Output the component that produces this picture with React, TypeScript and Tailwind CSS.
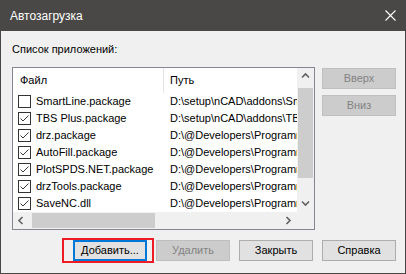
import React from 'react';

const rows = [
  { name: 'SmartLine.package', path: 'D:\\setup\\nCAD\\addons\\SmartLine\\SmartLine.package', checked: false },
  { name: 'TBS Plus.package', path: 'D:\\setup\\nCAD\\addons\\TBS Plus\\TBS Plus.package', checked: true },
  { name: 'drz.package', path: 'D:\\@Developers\\Programmers\\drz\\drz.package', checked: true },
  { name: 'AutoFill.package', path: 'D:\\@Developers\\Programmers\\AutoFill\\AutoFill.package', checked: true },
  { name: 'PlotSPDS.NET.package', path: 'D:\\@Developers\\Programmers\\PlotSPDS\\PlotSPDS.NET.package', checked: true },
  { name: 'drzTools.package', path: 'D:\\@Developers\\Programmers\\drzTools\\drzTools.package', checked: true },
  { name: 'SaveNC.dll', path: 'D:\\@Developers\\Programmers\\SaveNC\\SaveNC.dll', checked: true },
];

const Chevron = ({ dir }: { dir: 'up' | 'down' | 'left' | 'right' }) => {
  const pts = {
    up: '1,5.5 4.5,2 8,5.5',
    down: '1,2.5 4.5,6 8,2.5',
    left: '5.5,1 2,4.5 5.5,8',
    right: '2.5,1 6,4.5 2.5,8',
  }[dir];
  return (
    <svg width="9" height="9" viewBox="0 0 9 9">
      <polyline points={pts} fill="none" stroke="#606060" strokeWidth="1.6" />
    </svg>
  );
};

const CheckBox = ({ checked }: { checked: boolean }) => (
  <span className="w-[13px] h-[13px] border border-[#333333] bg-white flex items-center justify-center shrink-0">
    {checked && (
      <svg width="11" height="11" viewBox="0 0 11 11">
        <polyline points="1.5,5.5 4,8 9.5,2.5" fill="none" stroke="#3a3a3a" strokeWidth="1" />
      </svg>
    )}
  </span>
);

const WinButton = ({ label, disabled, focused }: { label: string; disabled?: boolean; focused?: boolean }) => (
  <button
    className={`w-[74px] h-[21px] flex items-center justify-center text-[11px] leading-none ${
      disabled
        ? 'bg-[#cccccc] border border-[#bfbfbf] text-[#838383]'
        : focused
        ? 'bg-[#e1e1e1] border-2 border-[#0078d7] text-black'
        : 'bg-[#e1e1e1] border border-[#adadad] text-black'
    }`}
  >
    {label}
  </button>
);

export default function App() {
  return (
    <div className="w-[406px] h-[274px] flex flex-col bg-[#4a4846] font-['Liberation_Sans',sans-serif] text-[11px] text-black">
      {/* Title bar */}
      <div className="h-[31px] flex items-center justify-between pl-[10px] pr-[10px] text-white text-[12px]">
        <span>Автозагрузка</span>
        <svg width="11" height="11" viewBox="0 0 11 11">
          <path d="M0.5 0.5 L10.5 10.5 M10.5 0.5 L0.5 10.5" stroke="#ffffff" strokeWidth="1.1" />
        </svg>
      </div>

      {/* Body */}
      <div className="flex-1 mx-px mb-px bg-[#f0f0f0] flex flex-col pl-[11px] pr-[9px]">
        <div className="mt-[11px] h-[14px] leading-[14px]">Список приложений:</div>

        <div className="flex mt-[11px]">
          {/* List view */}
          <div className="w-[303px] h-[163px] border border-[#828790] bg-white grid grid-cols-[1fr_17px] grid-rows-[1fr_17px]">
            <div className="overflow-hidden min-w-0">
              <div className="h-[25px] flex items-center">
                <div className="w-[150px] pl-[7px]">Файл</div>
                <div className="w-px h-[25px] bg-[#e5e5e5]" />
                <div className="pl-[6px]">Путь</div>
              </div>
              {rows.map((r) => (
                <div key={r.name} className="h-[17px] flex items-center whitespace-nowrap">
                  <div className="w-[151px] shrink-0 flex items-center pl-[5px] gap-[5px] overflow-hidden">
                    <CheckBox checked={r.checked} />
                    <span>{r.name}</span>
                  </div>
                  <div className="flex-1 min-w-0 pl-[6px] overflow-hidden">{r.path}</div>
                </div>
              ))}
            </div>

            {/* Vertical scrollbar */}
            <div className="bg-[#f0f0f0] flex flex-col">
              <div className="h-[17px] flex items-center justify-center">
                <Chevron dir="up" />
              </div>
              <div className="mx-px mt-[3px] h-[90px] bg-[#cdcdcd]" />
              <div className="flex-1" />
              <div className="h-[17px] flex items-center justify-center">
                <Chevron dir="down" />
              </div>
            </div>

            {/* Horizontal scrollbar */}
            <div className="bg-[#f0f0f0] flex items-stretch">
              <div className="w-[17px] flex items-center justify-center">
                <Chevron dir="left" />
              </div>
              <div className="my-px ml-[2px] w-[123px] bg-[#cdcdcd]" />
              <div className="flex-1" />
              <div className="w-[17px] flex items-center justify-center">
                <Chevron dir="right" />
              </div>
            </div>
            <div className="bg-[#f0f0f0]" />
          </div>

          {/* Side buttons */}
          <div className="ml-[7px] mt-px flex flex-col gap-[6px]">
            <WinButton label="Вверх" disabled />
            <WinButton label="Вниз" disabled />
          </div>
        </div>

        {/* Bottom buttons */}
        <div className="mt-[10px] flex justify-end gap-[9px]">
          <div className="relative">
            <WinButton label="Добавить..." focused />
            <div className="absolute -left-[11px] -right-[7px] -top-[2px] -bottom-[2px] border-2 border-[#ed1c24] pointer-events-none" />
          </div>
          <WinButton label="Удалить" disabled />
          <WinButton label="Закрыть" />
          <WinButton label="Справка" />
        </div>
      </div>
    </div>
  );
}
